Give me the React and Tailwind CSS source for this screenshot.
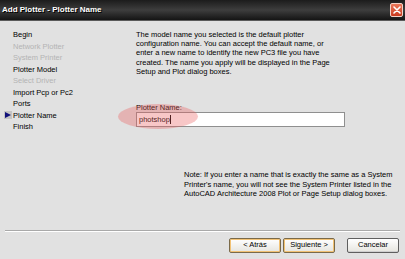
const FONT = { fontFamily: '"Liberation Sans", Arial, sans-serif' };

const STEPS = [
  { label: 'Begin' },
  { label: 'Network Plotter', disabled: true },
  { label: 'System Printer', disabled: true },
  { label: 'Plotter Model' },
  { label: 'Select Driver', disabled: true },
  { label: 'Import Pcp or Pc2' },
  { label: 'Ports' },
  { label: 'Plotter Name', current: true },
  { label: 'Finish' },
];

const INTRO = [
  'The model name you selected is the default plotter',
  'configuration name. You can accept the default name, or',
  'enter a new name to identify the new PC3 file you have',
  'created. The name you apply will be displayed in the Page',
  'Setup and Plot dialog boxes.',
];

const NOTE = [
  'Note: If you enter a name that is exactly the same as a System',
  "Printer's name, you will not see the System Printer listed in the",
  'AutoCAD Architecture 2008 Plot or Page Setup dialog boxes.',
];

const CloseButton = () => (
  <div className="w-[13px] h-[14px] rounded-[2px] border border-[#f3d2c8] bg-gradient-to-b from-[#e9775a] to-[#c8381c] flex items-center justify-center">
    <svg width="8" height="8" viewBox="0 0 8 8">
      <path d="M1 1 L7 7 M7 1 L1 7" stroke="white" strokeWidth="1.6" strokeLinecap="round" />
    </svg>
  </div>
);

const StepList = () => (
  <ul className="w-[120px] pt-[8px] text-[7.5px] leading-[11.5px]">
    {STEPS.map(s => (
      <li key={s.label} className="flex items-center h-[11.5px]">
        <span className="w-[13px] flex justify-end pr-[1px]">
          {s.current && (
            <span className="w-[8px] h-[8px] bg-[#c4c4c4] flex items-center justify-center">
              <svg width="6" height="6" viewBox="0 0 6 6">
                <path d="M0 0 L6 3 L0 6 Z" fill="#10107a" />
              </svg>
            </span>
          )}
        </span>
        <span className={s.disabled ? 'text-[#b4b4b4]' : 'text-black'}>{s.label}</span>
      </li>
    ))}
  </ul>
);

const WizardButton = ({ children, hot }) => (
  <button
    className={`w-[52px] h-[15px] rounded-[2px] border text-[7.5px] leading-none text-black bg-gradient-to-b from-white to-[#e6e5df] ${
      hot
        ? 'border-[#7a6a4a] shadow-[inset_0_0_0_1px_#f2c274]'
        : 'border-[#5f5f5f] shadow-[inset_0_-1px_0_#cfcfcf]'
    }`}
    style={FONT}
  >
    {children}
  </button>
);

const Lines = ({ lines, className }) => (
  <div className={className}>
    {lines.map(l => (
      <div key={l} className="whitespace-nowrap">{l}</div>
    ))}
  </div>
);

export default function App() {
  return (
    <div className="w-[405px] h-[259px] bg-[#e1e1e1] flex flex-col overflow-hidden relative" style={FONT}>
      <div className="h-[21px] bg-gradient-to-b from-[#1c1c1c] via-[#3e3e3e] to-[#151515] flex items-center justify-between pl-[2px] pr-[2px] border-b border-[#5a5a5a]">
        <span className="text-white font-bold text-[8px] [text-shadow:1px_1px_0_#000]">
          Add Plotter - Plotter Name
        </span>
        <CloseButton />
      </div>

      <div className="flex flex-1 min-h-0">
        <StepList />
        <div className="flex-1 pl-[16px] pr-[6px] pt-[9px] text-black">
          <Lines lines={INTRO} className="text-[7.5px] leading-[9.2px]" />
          <div className="mt-[27px] text-[7.5px] leading-[9px]">Plotter Name:</div>
          <div className="w-[209px] h-[15px] bg-white border border-[#8f8f8f] flex items-center pl-[2px] text-[7.5px]">
            photshop<span className="w-px h-[9px] bg-black ml-[0.5px]" />
          </div>
          <Lines lines={NOTE} className="mt-[43px] ml-[48px] text-[7.5px] leading-[9.5px]" />
        </div>
      </div>

      <div className="mx-[5px] h-[2px] border-t border-[#a9a9a9] border-b border-b-white" />
      <div className="h-[27px] flex items-center justify-end gap-[2px] pr-[6px] pb-[1px]">
        <WizardButton hot>&lt; Atrás</WizardButton>
        <WizardButton hot>Siguiente &gt;</WizardButton>
        <span className="w-[8px]" />
        <WizardButton>Cancelar</WizardButton>
      </div>

      <div className="absolute left-[118px] top-[104px] w-[80px] h-[25px] rounded-[50%] bg-[rgba(235,95,95,0.35)] pointer-events-none" />
    </div>
  );
}
